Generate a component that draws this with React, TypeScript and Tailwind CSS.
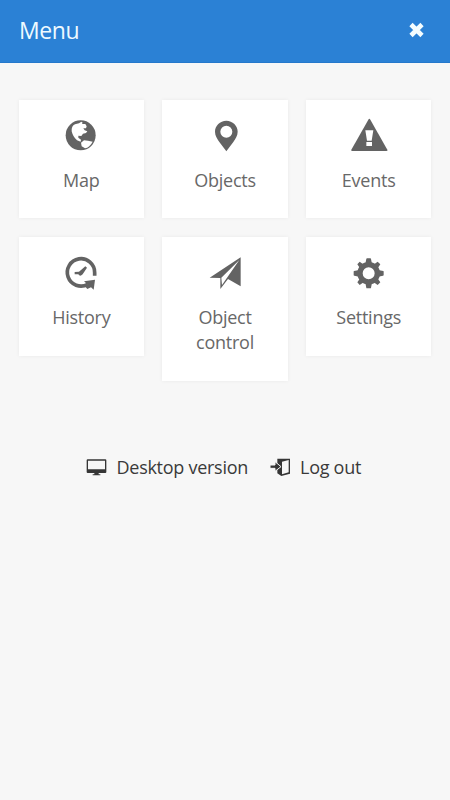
import type { ReactNode } from "react";

function Icon({ box, children }: { box: string; children: ReactNode }) {
  return (
    <svg width="60" height="50" viewBox={box} className="shrink-0" fill="#636363">
      {children}
    </svg>
  );
}

const items: { label: string; icon: ReactNode }[] = [
  {
    label: "Map",
    icon: (
      <Icon box="4 0 180 150">
        <circle cx="93" cy="76" r="45" />
        <path fill="#fff" d="M66 64Q65 48 76 43L88 40L95 35L99 38L97 42L107 42L111 49L109 55L101 55L105 61L113 64L109 69L100 71L95 78L86 77L86 83L94 89L93 95L82 91Q70 81 66 64Z" />
        <path fill="#fff" d="M94 98L103 91L115 92L129 95Q120 112 106 115L96 109Z" />
      </Icon>
    ),
  },
  {
    label: "Objects",
    icon: (
      <Icon box="1 0 180 150">
        <path fillRule="evenodd" d="M95 32C76 32 61 47 61 65C61 77 68 87 74 96L95 124L116 96C122 87 129 77 129 65C129 47 114 32 95 32ZM95 47A18 18 0 1 1 95 83A18 18 0 1 1 95 47Z" />
      </Icon>
    ),
  },
  {
    label: "Events",
    icon: (
      <Icon box="-3 0 180 150">
        <path d="M85 29Q88 24 91 29L142 119Q144 123 139 123H37Q32 123 34 119Z" />
        <path fill="#fff" d="M76 61H100L95 92H81ZM79 96H96V108H79Z" />
      </Icon>
    ),
  },
  {
    label: "History",
    icon: (
      <Icon box="4 -9 180 150">
        <path fill="none" stroke="#636363" strokeWidth="11" d="M135 77V68A41 41 0 1 0 114 103" />
        <path d="M103 94L136 89L132 119L124 112L113 117L107 110L113 103Z" />
        <path d="M75 66L88 65L107 49L112 53L99 73Q91 81 86 73L75 73Z" />
      </Icon>
    ),
  },
  {
    label: "Object control",
    icon: (
      <Icon box="0 -9 180 150">
        <path fillRule="evenodd" d="M137 22V109L99 87L76 117V84L44 83ZM133 30L79 83L81 105Z" />
      </Icon>
    ),
  },
  {
    label: "Settings",
    icon: (
      <Icon box="-3 -9 180 150">
        <circle cx="86" cy="70" r="26" fill="none" stroke="#636363" strokeWidth="16" />
        <path d="M79 26Q79 25 81 25H91Q93 25 93 27L96 42H76ZM79 114Q79 115 81 115H91Q93 115 93 113L96 98H76ZM42 63Q41 63 41 65V75Q41 77 43 77L58 80V60ZM130 63Q131 63 131 65V75Q131 77 129 77L114 80V60Z" />
        <path d="M52 43L59 35L72 44L61 56ZM113 35L121 43L112 56L100 44ZM52 97L59 105L72 96L61 84ZM113 105L121 97L112 84L100 96Z" />
      </Icon>
    ),
  },
];

export default function App() {
  return (
    <div className="min-h-[800px] w-full bg-[#f7f7f7] font-['Open_Sans','Noto_Sans',sans-serif]">
      <header className="flex h-[62.5px] items-center justify-between border-b border-[#2578cb] bg-[#2b81d5] pl-[19px] pr-[25px]">
        <h1 className="mt-[-1.5px] text-[23px] leading-8 tracking-[-0.4px] text-[#eefaff]">Menu</h1>
        <svg width="17" height="16" viewBox="0 0 17 16" className="mt-[-1.5px]">
          <path d="M3 2.5L14 13.5M14 2.5L3 13.5" stroke="#f4fdff" strokeWidth="4.6" />
        </svg>
      </header>
      <main>
        <nav className="grid grid-cols-3 items-start gap-x-[18px] gap-y-[19px] px-[18.5px] pt-[37px]">
          {items.map((item) => (
            <a
              key={item.label}
              className="flex min-h-[118.5px] flex-col items-center bg-white px-6 pb-[25.5px] pt-[10px] text-center text-[18px] leading-[25px] tracking-[-0.25px] text-[#686868] shadow-[0_0_4px_rgba(0,0,0,0.06)]"
            >
              {item.icon}
              <span className="mt-[8px]">{item.label}</span>
            </a>
          ))}
        </nav>
        <footer className="mt-[74px] flex items-center pl-[86px] text-[18px] leading-[25px] tracking-[-0.27px] text-[#3a3a3a]">
          <svg width="21" height="18" viewBox="0 0 63 54" className="mr-[9.5px]">
            <path fillRule="evenodd" fill="#363636" d="M5 4H58Q61 4 61 7V42Q61 45 58 45H38V49H43V52H20V49H25V45H5Q2 45 2 42V7Q2 4 5 4ZM6 8V34H57V8Z" />
          </svg>
          <span>Desktop version</span>
          <svg width="21" height="20" viewBox="0 0 63 60" className="ml-[21.5px] mr-[9.5px]">
            <path fill="#363636" d="M22 5H60V50L34 57L22 49Z" />
            <path fill="#f7f7f7" d="M36 14L56 9V46L36 52Z" />
            <path fill="#363636" stroke="#f7f7f7" strokeWidth="3" d="M0 24H15V14L33 29L15 43V34H0Z" />
          </svg>
          <span>Log out</span>
        </footer>
      </main>
    </div>
  );
}
